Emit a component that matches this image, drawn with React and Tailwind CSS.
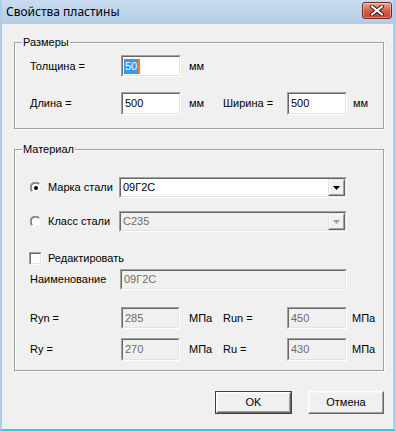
import React from "react";

const font = { fontFamily: '"Liberation Sans", Arial, sans-serif' };

function Sunken({ className = "", disabled = false, children }) {
  return (
    <div
      className={`box-border border border-t-[#a0a0a0] border-l-[#a0a0a0] border-b-white border-r-white ${className}`}
    >
      <div
        className={
          disabled
            ? "box-border h-full w-full border border-t-[#696969] border-l-[#696969] border-b-[#e3e3e3] border-r-[#e3e3e3] bg-[#f0f0f0] flex items-center text-[#6d6d6d]"
            : "box-border h-full w-full border border-t-[#696969] border-l-[#696969] border-b-[#e3e3e3] border-r-[#e3e3e3] bg-white flex items-center text-black"
        }
      >
        {children}
      </div>
    </div>
  );
}

function Field({ className, value, disabled, selected }) {
  return (
    <Sunken className={className} disabled={disabled}>
      {selected ? (
        <span className="ml-[1px] flex items-center">
          <span className="bg-[#3399ff] text-white leading-[15px] px-[1px]">{value}</span>
          <span className="w-[2px] h-[15px] bg-[#e87d1e]" />
        </span>
      ) : (
        <span className="ml-[2px] leading-[15px]">{value}</span>
      )}
    </Sunken>
  );
}

function Combo({ value, disabled }) {
  return (
    <Sunken className="w-[228px] h-[21px]" disabled={disabled}>
      <span className="ml-[2px] flex-1 leading-[15px]">{value}</span>
      <div className="box-border w-[17px] h-[17px] mr-0 border border-t-[#e3e3e3] border-l-[#e3e3e3] border-b-[#696969] border-r-[#696969] bg-[#f0f0f0]">
        <div className="box-border w-full h-full border border-t-white border-l-white border-b-[#a0a0a0] border-r-[#a0a0a0] flex items-center justify-center">
          <svg width="7" height="4" viewBox="0 0 7 4">
            <path d="M0 0 H7 L3.5 4 Z" fill={disabled ? "#a0a0a0" : "#000"} />
          </svg>
        </div>
      </div>
    </Sunken>
  );
}

function Radio({ checked }) {
  return (
    <svg width="12" height="12" viewBox="0 0 12 12" className="shrink-0">
      <circle cx="6" cy="6" r="5.5" fill="#fff" />
      <path d="M1.5 9.5 A5.5 5.5 0 0 1 9.5 1.5" stroke="#808080" strokeWidth="1" fill="none" />
      <path d="M2.3 8.8 A4.5 4.5 0 0 1 8.8 2.3" stroke="#404040" strokeWidth="1" fill="none" />
      <path d="M10.5 2.5 A5.5 5.5 0 0 1 2.5 10.5" stroke="#ffffff" strokeWidth="1" fill="none" />
      <path d="M9.6 3.2 A4.5 4.5 0 0 1 3.2 9.6" stroke="#e3e3e3" strokeWidth="1" fill="none" />
      {checked && <circle cx="6" cy="6" r="2" fill="#000" />}
    </svg>
  );
}

function Group({ title, className, children }) {
  return (
    <div
      className={`relative box-border border border-[#a0a0a0] shadow-[inset_1px_1px_0_#fff,1px_1px_0_#fff] ${className}`}
    >
      <span className="absolute left-[7px] -top-[8px] bg-[#f0f0f0] px-[1px] leading-[14px]">
        {title}
      </span>
      {children}
    </div>
  );
}

function Button({ label, isDefault }) {
  return (
    <div
      className={
        isDefault
          ? "box-border w-[77px] h-[23px] border border-[#404040]"
          : "box-border w-[76px] h-[23px]"
      }
    >
      <div className="box-border h-full w-full border border-t-white border-l-white border-b-[#696969] border-r-[#696969]">
        <div className="box-border h-full w-full border border-t-[#f6f6f6] border-l-[#f6f6f6] border-b-[#a0a0a0] border-r-[#a0a0a0] bg-[#f0f0f0] flex items-center justify-center">
          {label}
        </div>
      </div>
    </div>
  );
}

export default function App() {
  return (
    <div
      style={font}
      className="w-[396px] h-[431px] box-border flex flex-col bg-[#b9d1ea] border-l-[2px] border-l-[#b3cbe5] border-r-[3px] border-r-[#a8cfee] border-b-[2px] border-b-[#35c3ef] text-[11px] text-black"
    >
      {/* Title bar */}
      <div className="h-[24px] shrink-0 flex items-center justify-between bg-gradient-to-b from-[#c9dcf0] to-[#b4cce7]">
        <span
          className="ml-[4px] text-[12px] text-black"
          style={{ fontFamily: '"Noto Sans", "Liberation Sans", sans-serif' }}
        >
          Свойства пластины
        </span>
        <div className="mr-[1px] mb-[4px] w-[30px] h-[17px] box-border rounded-[3px] border border-[#6e2d24] bg-gradient-to-b from-[#e9a898] via-[#d2604b] to-[#c5432e] flex items-center justify-center shadow-[inset_0_0_0_1px_rgba(255,255,255,0.35)]">
          <svg width="14" height="11" viewBox="0 0 14 11">
            <path d="M2 1.5 L12 9.5 M12 1.5 L2 9.5" stroke="#3a1a14" strokeWidth="4" strokeLinecap="round" />
            <path d="M2 1.5 L12 9.5 M12 1.5 L2 9.5" stroke="#ffffff" strokeWidth="2.2" strokeLinecap="round" />
          </svg>
        </div>
      </div>

      {/* Client area */}
      <div className="flex-1 bg-[#f0f0f0] flex flex-col pl-[12px] pt-[18px]">
        <Group title="Размеры" className="w-[370px] h-[87px] flex flex-col pl-[15px] pt-[12px]">
          <div className="flex items-center h-[22px]">
            <span className="w-[91px]">Толщина =</span>
            <Field className="w-[60px] h-[22px]" value="50" selected />
            <span className="ml-[8px]">мм</span>
          </div>
          <div className="flex items-center h-[23px] mt-[15px]">
            <span className="w-[91px]">Длина =</span>
            <Field className="w-[60px] h-[23px]" value="500" />
            <span className="ml-[8px] w-[34px]">мм</span>
            <span className="w-[64px]">Ширина =</span>
            <Field className="w-[60px] h-[23px]" value="500" />
            <span className="ml-[6px]">мм</span>
          </div>
        </Group>

        <Group title="Материал" className="mt-[20px] w-[370px] h-[222px] flex flex-col pl-[15px] pt-[27px]">
          <div className="flex items-center h-[21px]">
            <Radio checked />
            <span className="ml-[6px] w-[71px]">Марка стали</span>
            <Combo value="09Г2С" />
          </div>
          <div className="flex items-center h-[21px] mt-[13px]">
            <Radio />
            <span className="ml-[6px] w-[71px]">Класс стали</span>
            <Combo value="С235" disabled />
          </div>
          <div className="flex items-center h-[16px] mt-[18px]">
            <div className="box-border w-[13px] h-[13px] border border-t-[#a0a0a0] border-l-[#a0a0a0] border-b-white border-r-white -ml-[1px]">
              <div className="box-border w-full h-full border border-t-[#696969] border-l-[#696969] border-b-[#e3e3e3] border-r-[#e3e3e3] bg-white" />
            </div>
            <span className="ml-[6px]">Редактировать</span>
          </div>
          <div className="flex items-center h-[21px] mt-[3px]">
            <span className="w-[90px]">Наименование</span>
            <Field className="w-[227px] h-[21px]" value="09Г2С" disabled />
          </div>
          <div className="flex items-center h-[22px] mt-[17px]">
            <span className="w-[91px]">Ryn =</span>
            <Field className="w-[59px] h-[22px]" value="285" disabled />
            <span className="ml-[9px] w-[34px]">МПа</span>
            <span className="w-[64px]">Run =</span>
            <Field className="w-[60px] h-[22px]" value="450" disabled />
            <span className="ml-[5px]">МПа</span>
          </div>
          <div className="flex items-center h-[23px] mt-[9px]">
            <span className="w-[91px]">Ry =</span>
            <Field className="w-[59px] h-[23px]" value="270" disabled />
            <span className="ml-[9px] w-[34px]">МПа</span>
            <span className="w-[64px]">Ru =</span>
            <Field className="w-[60px] h-[23px]" value="430" disabled />
            <span className="ml-[5px]">МПа</span>
          </div>
        </Group>

        <div className="mt-[20px] flex pl-[201px] gap-[16px]">
          <Button label="OK" isDefault />
          <Button label="Отмена" />
        </div>
      </div>
    </div>
  );
}
